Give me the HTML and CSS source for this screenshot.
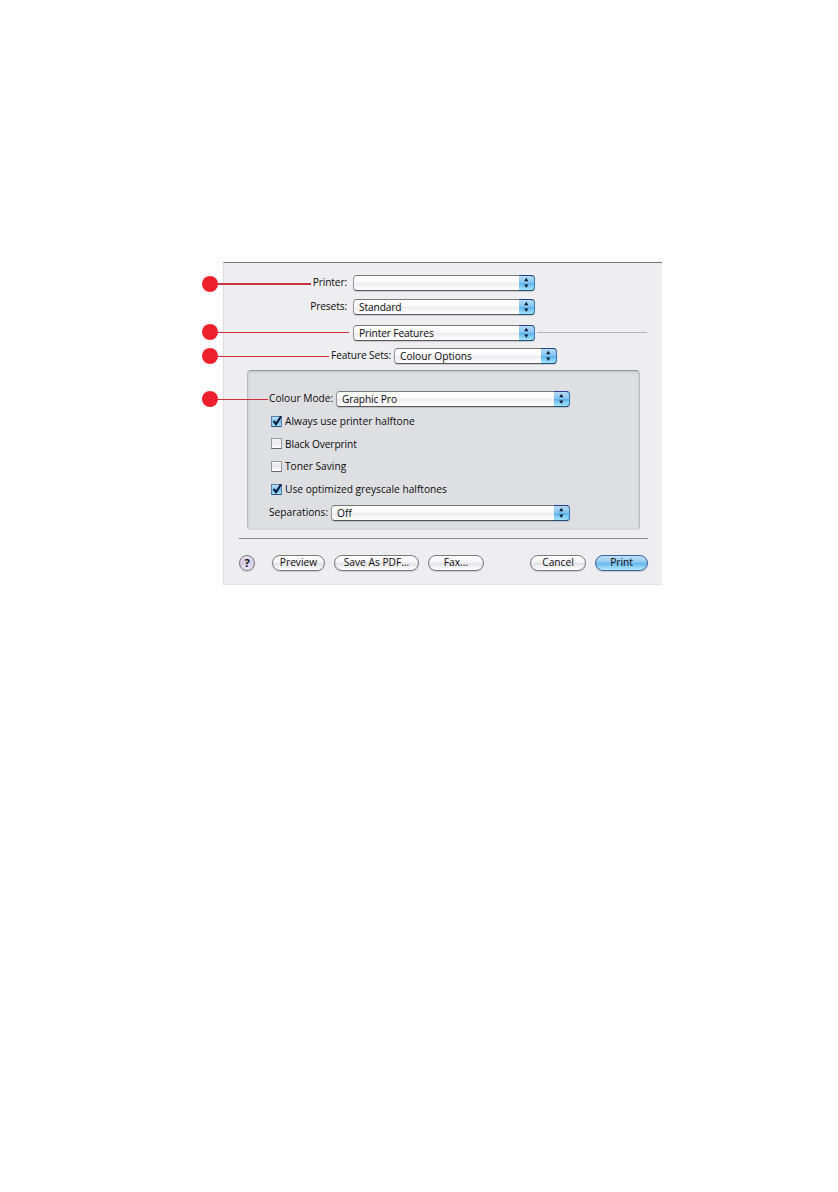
FILE: index.html
```html
<!DOCTYPE html>
<html lang="en">
<head>
<meta charset="UTF-8">
<meta name="viewport" content="width=device-width, initial-scale=1.0">
<title>Print</title>
<link rel="stylesheet" href="styles.css">
</head>
<body>
<svg class="defs" width="0" height="0">
    <symbol id="arrows" viewBox="0 0 15 14">
        <path d="M7.3 1.8 L9.4 5.3 H5.2 Z M7.3 11.9 L9.4 8.4 H5.2 Z" fill="#0b1c33"/>
    </symbol>
    <symbol id="check" viewBox="0 0 14 14">
        <path d="M3.6 6 L6 9.2 L11 1.4" fill="none" stroke="#0c1836" stroke-width="2"/>
    </symbol>
</svg>

<form class="dialog">
    <div class="row printer">
        <span class="callout"></span>
        <span class="label tight">Printer:</span>
        <div class="popup"><span></span><svg class="cap"><use href="#arrows"/></svg></div>
    </div>
    <div class="row presets">
        <span class="label tight">Presets:</span>
        <div class="popup"><span class="tight">Standard</span><svg class="cap"><use href="#arrows"/></svg></div>
    </div>
    <div class="row pane">
        <span class="callout"></span>
        <span class="label"></span>
        <div class="popup"><span class="tight">Printer Features</span><svg class="cap"><use href="#arrows"/></svg></div>
        <span class="rule"></span>
    </div>
    <div class="row sets">
        <span class="callout"></span>
        <span class="label tight">Feature Sets:</span>
        <div class="popup"><span>Colour Options</span><svg class="cap"><use href="#arrows"/></svg></div>
    </div>

    <div class="panel">
        <div class="row mode">
            <span class="callout"></span>
            <span class="label">Colour Mode:</span>
            <div class="popup"><span class="tight">Graphic Pro</span><svg class="cap"><use href="#arrows"/></svg></div>
        </div>
        <div class="checks">
            <div class="check"><span class="box on"><svg class="tick"><use href="#check"/></svg></span>Always use printer halftone</div>
            <div class="check"><span class="box"></span><span class="tight">Black Overprint</span></div>
            <div class="check"><span class="box"></span>Toner Saving</div>
            <div class="check"><span class="box on"><svg class="tick"><use href="#check"/></svg></span>Use optimized greyscale halftones</div>
        </div>
        <div class="row separations">
            <span class="label">Separations:</span>
            <div class="popup"><span>Off</span><svg class="cap"><use href="#arrows"/></svg></div>
        </div>
    </div>

    <div class="footer">
        <button type="button" class="help">?</button>
        <button type="button" class="btn preview">Preview</button>
        <button type="button" class="btn save">Save As PDF...</button>
        <button type="button" class="btn fax">Fax...</button>
        <button type="button" class="btn cancel">Cancel</button>
        <button type="button" class="btn print">Print</button>
    </div>
</form>
</body>
</html>
```
FILE: styles.css
```css
* {
    box-sizing: border-box;
}

body {
    margin: 0;
    height: 1192px;
    background-color: #fff;
    font-family: "Open Sans", "Noto Sans", sans-serif;
    font-size: 10.2px;
    color: #0c0c0e;
}

.defs {
    position: absolute;
}

.dialog {
    width: 439px;
    height: 323px;
    margin: 262px 0 0 223px;
    padding: 12px 15px 0 16px;
    float: left;
    background-color: #eeeef1;
    border-top: 1px solid #77777c;
    border-left: 1px solid #dcdce1;
    border-bottom: 1px solid #e4e4e8;
}

.row {
    position: relative;
    display: flex;
    height: 16px;
    line-height: 15px;
    white-space: nowrap;
}

.label {
    flex: none;
    width: 107px;
    margin-right: 6px;
    text-align: right;
}

.tight {
    letter-spacing: -0.12px;
}

.popup {
    display: flex;
    justify-content: space-between;
    width: 182px;
    height: 16px;
    padding-left: 5px;
    line-height: 14px;
    border: 1px solid #96969c;
    border-top-color: #77777d;
    border-bottom-color: #55555b;
    border-radius: 4px;
    background: linear-gradient(#fff 0%, #fafafb 45%, #ececef 52%, #fff 100%);
    box-shadow: 0 1px 1px rgba(0, 0, 0, 0.15);
}

.cap {
    flex: none;
    width: 16px;
    height: 16px;
    margin: -1px -1px 0 0;
    border: 1px solid #3b78b4;
    border-top-color: #29408c;
    border-left: 0;
    border-bottom-color: #1f4f7b;
    border-radius: 0 4px 4px 0;
    background: linear-gradient(#b5dcf6 0%, #83c3f0 48%, #5db2ec 52%, #a4e4fb 100%);
}

.presets {
    margin-top: 8px;
}

.pane {
    margin-top: 10px;
}

.rule {
    width: 110px;
    height: 1px;
    margin: 7px 0 0 2px;
    background-color: #b0b0b6;
}

.sets {
    margin-top: 7px;
}

.sets .label {
    width: 151px;
    margin-right: 3px;
}

.sets .popup {
    width: 163px;
}

/* red pointers in the margin */
.callout {
    position: absolute;
    top: 1px;
    left: -38px;
    width: 109px;
    height: 16px;
}

.callout::before {
    content: "";
    display: block;
    width: 16px;
    height: 16px;
    border-radius: 50%;
    background-color: #ee202e;
}

.callout::after {
    content: "";
    display: block;
    height: 2px;
    margin: -9px 0 0 15px;
    background-color: #c8343f;
}

.pane .callout {
    top: -1px;
    width: 147px;
}

.sets .callout {
    top: 0;
    width: 127px;
}

.mode .callout {
    top: 0;
    left: -68px;
    width: 66px;
}

.pane .callout::after,
.sets .callout::after,
.mode .callout::after {
    height: 1px;
    margin-top: -8px;
    background-color: #d42c38;
}

.panel {
    width: 393px;
    height: 160px;
    margin: 6px 0 0 7px;
    padding: 20px 0 0 21px;
    background-color: #dedfe2;
    border: 1px solid #b9babe;
    border-top-color: #96979b;
    border-bottom-color: #d0d1d5;
    border-radius: 4px;
    box-shadow: inset 0 1px 3px rgba(0, 0, 0, 0.14);
}

.mode .label {
    width: 64px;
    margin-right: 3px;
    text-align: left;
}

.mode .popup {
    width: 234px;
}

.mode .callout {
    left: -67px;
}

.checks {
    margin: 3px 0 5px 2px;
}

.check {
    display: flex;
    align-items: center;
    height: 22.6px;
    white-space: nowrap;
}

.box {
    width: 11px;
    height: 11px;
    margin-right: 3px;
    border: 1px solid #99999e;
    border-bottom-color: #68686d;
    background: linear-gradient(#f3f3f4, #e9e9ec 50%, #fff);
}

.box.on {
    border-color: #5380a9;
    border-bottom-color: #2c5378;
    background: linear-gradient(#c5e1f7, #79bbed 50%, #a5e3fb);
}

.tick {
    display: block;
    width: 14px;
    height: 14px;
    margin: -2px 0 0 -2px;
    overflow: visible;
}

.separations .label {
    width: 60px;
    margin-right: 2px;
    text-align: left;
}

.separations .popup {
    width: 239px;
}

.footer {
    display: flex;
    width: 409px;
    margin: 8px 0 0 -1px;
    padding-top: 16px;
    border-top: 1px solid #86868c;
}

.help,
.btn {
    flex: none;
    height: 16px;
    padding: 0 0 1px;
    font-family: inherit;
    font-size: 10.2px;
    line-height: 13px;
    color: #0c0c0e;
    border: 1px solid #77777d;
    border-radius: 8px;
    background: linear-gradient(#fff 0%, #f4f4f6 45%, #e2e2e6 52%, #fff 100%);
    box-shadow: 0 1px 1px rgba(0, 0, 0, 0.15);
    white-space: nowrap;
}

.help {
    width: 16px;
    margin-right: 17px;
    font-size: 11px;
    font-weight: 700;
    background: linear-gradient(#e9e0f4, #d5cae8 50%, #efe8f9);
}

.preview {
    width: 53px;
    margin-right: 9px;
}

.save {
    width: 85px;
    margin-right: 9px;
}

.fax {
    width: 56px;
}

.cancel {
    width: 56px;
    margin: 0 9px 0 auto;
}

.print {
    width: 53px;
    border-color: #3d5f9d;
    background: linear-gradient(#c0e0f8 0%, #8dc8f1 45%, #65b5ec 52%, #b3ebfc 100%);
}
```
